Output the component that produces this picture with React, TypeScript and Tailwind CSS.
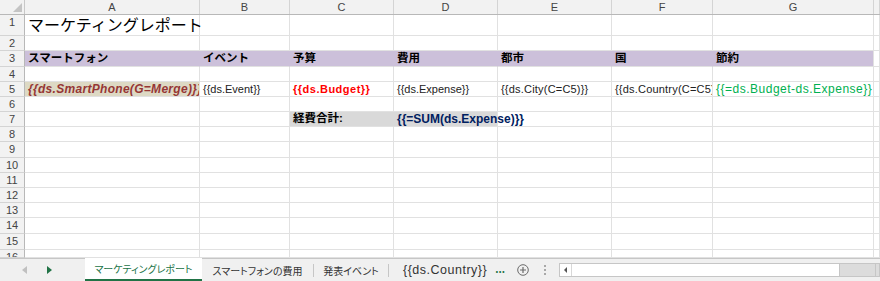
type Cell = { text?: string; cls?: string; bg?: string; br?: string; over?: boolean };

const letters = ["A", "B", "C", "D", "E", "F", "G", ""];

const gridCols = "grid grid-cols-[25px_175px_90px_104px_104px_114px_101px_161px_6px]";

const purple = "bg-[#ccc0da]";
const hdr = "font-bold text-black text-[11.5px] pl-[3px]";
const tmpl = "text-[11px] text-[#222] pl-[3px]";

const rows: { n: number; h: string; cells: Record<number, Cell> }[] = [
  {
    n: 1,
    h: "h-[21px]",
    cells: { 0: { text: "マーケティングレポート", cls: "text-[16px] text-black pl-[3px] pt-[1px]", over: true } },
  },
  { n: 2, h: "h-[15px]", cells: {} },
  {
    n: 3,
    h: "h-[16px]",
    cells: {
      0: { text: "スマートフォン", cls: hdr, bg: purple, br: "border-r-[#ccc0da]" },
      1: { text: "イベント", cls: hdr, bg: purple, br: "border-r-[#ccc0da]" },
      2: { text: "予算", cls: hdr, bg: purple, br: "border-r-[#ccc0da]" },
      3: { text: "費用", cls: hdr, bg: purple, br: "border-r-[#ccc0da]" },
      4: { text: "都市", cls: hdr, bg: purple, br: "border-r-[#ccc0da]" },
      5: { text: "国", cls: hdr, bg: purple, br: "border-r-[#ccc0da]" },
      6: { text: "節約", cls: hdr, bg: purple },
    },
  },
  { n: 4, h: "h-[15px]", cells: {} },
  {
    n: 5,
    h: "h-[15px]",
    cells: {
      0: {
        text: "{{ds.SmartPhone(G=Merge)}}",
        cls: "text-[12px] font-bold italic tracking-[0.3px] text-[#963634] pl-[3px]",
        bg: "bg-[#ddd9c4]",
      },
      1: { text: "{{ds.Event}}", cls: tmpl },
      2: { text: "{{ds.Budget}}", cls: "text-[11px] font-bold tracking-[0.5px] text-[#ff0000] pl-[3px]" },
      3: { text: "{{ds.Expense}}", cls: tmpl },
      4: { text: "{{ds.City(C=C5)}}", cls: `${tmpl} tracking-[0.2px]` },
      5: { text: "{{ds.Country(C=C5)}}", cls: `${tmpl} tracking-[0.2px]` },
      6: { text: "{{=ds.Budget-ds.Expense}}", cls: "text-[12px] tracking-[0.5px] text-[#00b050] pl-[3px]" },
    },
  },
  { n: 6, h: "h-[15px]", cells: {} },
  {
    n: 7,
    h: "h-[15px]",
    cells: {
      2: { text: "経費合計:", cls: hdr, bg: "bg-[#d9d9d9]", br: "border-r-[#d9d9d9]" },
      3: {
        text: "{{=SUM(ds.Expense)}}",
        cls: "text-[12px] font-bold text-[#002060] pl-[3px]",
        bg: "bg-[#d9d9d9]",
        over: true,
      },
    },
  },
  { n: 8, h: "h-[15px]", cells: {} },
  { n: 9, h: "h-[16px]", cells: {} },
  { n: 10, h: "h-[15px]", cells: {} },
  { n: 11, h: "h-[15px]", cells: {} },
  { n: 12, h: "h-[15px]", cells: {} },
  { n: 13, h: "h-[15px]", cells: {} },
  { n: 14, h: "h-[16px]", cells: {} },
  { n: 15, h: "h-[16px]", cells: {} },
  { n: 16, h: "h-[8px]", cells: {} },
];

function Tri({ dir, color }: { dir: "l" | "r"; color: string }) {
  return (
    <svg width="5" height="8" viewBox="0 0 5 8">
      <path d={dir === "r" ? "M0 0 L5 4 L0 8 Z" : "M5 0 L0 4 L5 8 Z"} fill={color} />
    </svg>
  );
}

export default function App() {
  return (
    <div className="w-[880px] h-[281px] overflow-hidden bg-white font-['Liberation_Sans','Noto_Sans_CJK_JP',sans-serif] flex flex-col">
      {/* column header */}
      <div className={`${gridCols} h-[15px] shrink-0 bg-[#f2f2f2] border-b border-[#b8b8b8]`}>
        <div className="relative border-r border-[#c8c8c8]">
          <svg className="absolute right-[2px] bottom-[2px]" width="9" height="9" viewBox="0 0 9 9">
            <path d="M9 0 L9 9 L0 9 Z" fill="#c4c4c4" />
          </svg>
        </div>
        {letters.map((l, i) => (
          <div
            key={i}
            className="border-r border-[#d4d4d4] text-[11px] leading-[14px] text-[#444] text-center"
          >
            {l}
          </div>
        ))}
      </div>

      {rows.map((r) => (
        <div key={r.n} className={`${gridCols} ${r.h} shrink-0`}>
          <div className="bg-[#f2f2f2] border-r border-[#b8b8b8] border-b border-b-[#d4d4d4] text-[11px] leading-[14px] text-[#444] text-center overflow-hidden">
            {r.n}
          </div>
          {letters.map((_, i) => {
            const c = r.cells[i];
            return (
              <div
                key={i}
                className={`border-r border-b border-[#e1e1e1] ${c?.br ?? ""} ${c?.bg ?? ""} ${
                  c?.over ? "relative z-10 overflow-visible" : "overflow-hidden"
                } flex items-center whitespace-nowrap`}
              >
                {c?.text && <span className={`${c.cls} leading-none`}>{c.text}</span>}
              </div>
            );
          })}
        </div>
      ))}

      {/* sheet tabs */}
      <div className="flex h-[23px] shrink-0 bg-[#f0f0f0] border-t border-[#c6c6c6] items-stretch font-['Noto_Sans_CJK_JP',sans-serif] text-[10px] [font-feature-settings:'palt'] text-[#333]">
        <div className="w-[85px] flex items-center">
          <div className="ml-[22px]">
            <Tri dir="l" color="#c0c0c0" />
          </div>
          <div className="ml-[20px]">
            <Tri dir="r" color="#217346" />
          </div>
        </div>
        <div className="w-[117px] bg-white -mt-px flex items-center justify-center border-b-2 border-[#217346] text-[#217346]">
          マーケティングレポート
        </div>
        <div className="w-[111px] flex items-center justify-center">スマートフォンの費用</div>
        <div className="w-px h-[13px] self-center bg-[#c6c6c6]" />
        <div className="w-[74px] flex items-center justify-center">発表イベント</div>
        <div className="w-px h-[13px] self-center bg-[#c6c6c6]" />
        <div className="w-[101px] flex items-center pl-[14px] overflow-hidden whitespace-nowrap font-['Liberation_Sans',sans-serif] text-[12.5px] tracking-[0.5px] text-[#333]">
          {"{{ds.Country}}"}
        </div>
        <div className="w-[20px] flex items-center justify-center text-[#217346] font-bold leading-none pb-[2px]">
          ...
        </div>
        <div className="w-[25px] flex items-center justify-center">
          <svg width="12" height="12" viewBox="0 0 12 12">
            <circle cx="6" cy="6" r="5.3" fill="none" stroke="#6b6b6b" strokeWidth="1" />
            <path d="M6 3 V9 M3 6 H9" stroke="#6b6b6b" strokeWidth="1.2" />
          </svg>
        </div>
        <div className="w-[20px] flex flex-col items-center justify-center gap-[2px]">
          <div className="w-[2px] h-[2px] bg-[#a8a8a8]" />
          <div className="w-[2px] h-[2px] bg-[#a8a8a8]" />
          <div className="w-[2px] h-[2px] bg-[#a8a8a8]" />
        </div>
        <div className="w-[4px]" />
        <div className="flex-1 flex items-center">
          <div className="h-[14px] flex w-full border border-[#c6c6c6] bg-[#dcdcdc]">
            <div className="w-[12px] bg-white border-r border-[#d8d8d8] flex items-center justify-center">
              <svg width="3" height="6" viewBox="0 0 3 6">
                <path d="M3 0 L0 3 L3 6 Z" fill="#555" />
              </svg>
            </div>
            <div className="w-[268px] bg-white border-r border-[#c6c6c6]" />
            <div className="w-[36px] border-r border-[#c6c6c6]" />
          </div>
        </div>
      </div>
    </div>
  );
}
